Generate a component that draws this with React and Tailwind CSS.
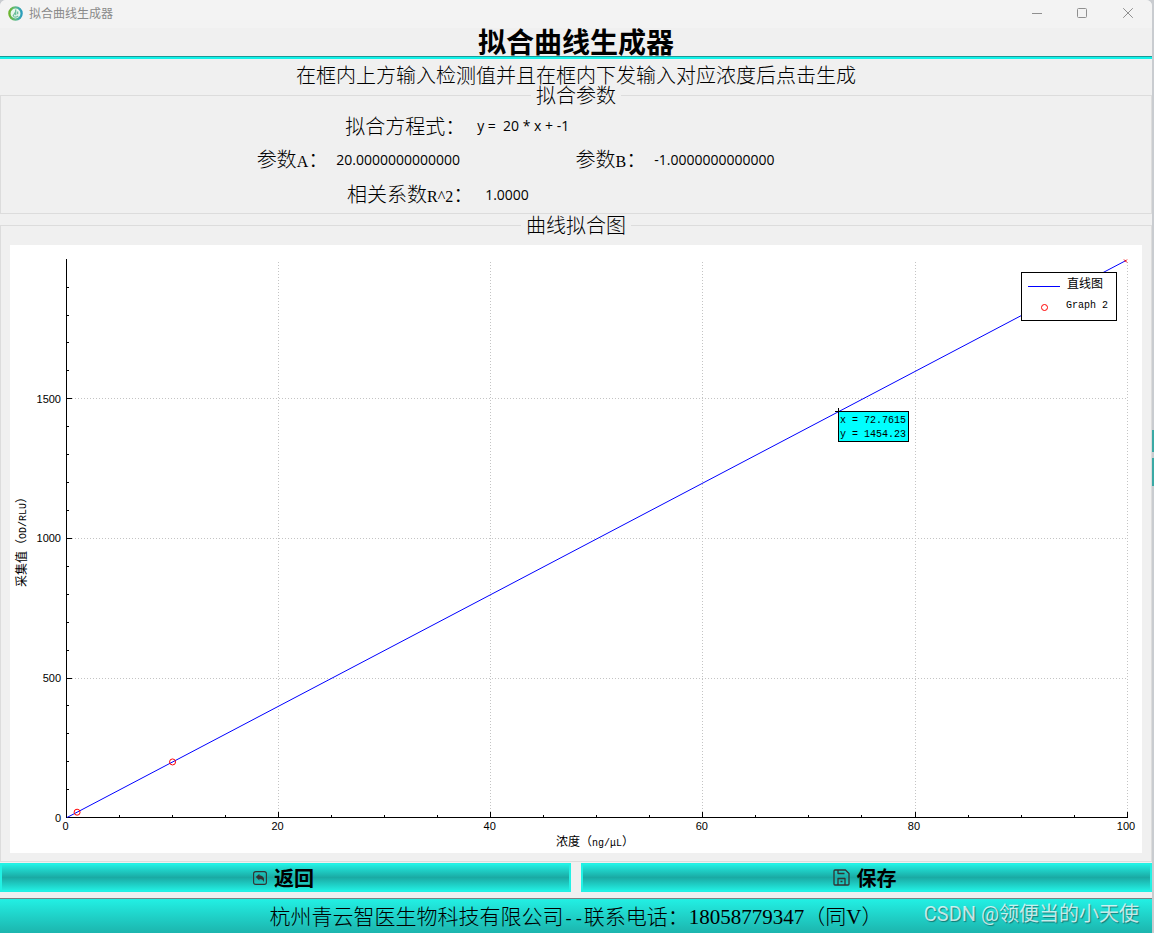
import React from "react";

const SONG = "font-['Liberation_Serif','Noto_Sans_CJK_SC',serif]";

const X0 = 56.5;
const Y0 = 572.5;
const px = (x) => X0 + x * 10.605;
const py = (y) => Y0 - y * 0.2792;
const snap = (v) => Math.round(v - 0.4) + 0.5;

function range(from, to, step) {
  const out = [];
  for (let v = from; v <= to; v += step) out.push(v);
  return out;
}

function AppIcon() {
  return (
    <svg viewBox="0 0 14 14" className="size-[15px]" aria-hidden="true">
      <defs>
        <linearGradient id="ring" x1="0" x2="1">
          <stop offset="0" stopColor="#6cb52f" />
          <stop offset="0.5" stopColor="#5dbb8a" />
          <stop offset="1" stopColor="#2b9dbd" />
        </linearGradient>
      </defs>
      <circle cx="7" cy="7" r="5.7" fill="#e9f6ee" stroke="url(#ring)" strokeWidth="2.2" />
      <path d="M7.2 3.2v5.4M4.6 9.6 7 5.6M5 9.8c1.6.8 3.4.6 4.6-.6M9 5.2v2.6" stroke="#6dbf9a" strokeWidth="1.2" fill="none" />
    </svg>
  );
}

function TitleBar() {
  return (
    <div className="flex h-7 items-center bg-[#f3f3f3] pb-0.5 pl-2">
      <AppIcon />
      <span className="ml-1.5 font-['Noto_Sans_CJK_SC',sans-serif] text-xs leading-4 text-[#8a8a8a]">拟合曲线生成器</span>
      <div className="ml-auto flex text-[#8f8f8f]">
        <button aria-label="最小化" className="grid h-6 w-[46px] place-items-center">
          <svg viewBox="0 0 10 10" className="size-2.5"><path d="M0 5.5h10" stroke="currentColor" /></svg>
        </button>
        <button aria-label="最大化" className="grid h-6 w-11 place-items-center">
          <svg viewBox="0 0 10 10" className="size-2.5"><rect x=".5" y=".5" width="9" height="9" rx="1" fill="none" stroke="currentColor" /></svg>
        </button>
        <button aria-label="关闭" className="grid h-6 w-12 place-items-center">
          <svg viewBox="0 0 10 10" className="size-2.5"><path d="M.2.2l9.6 9.6M9.8.2.2 9.8" stroke="currentColor" /></svg>
        </button>
      </div>
    </div>
  );
}

function Group({ title, className, children }) {
  return (
    <fieldset className={"min-w-0 border border-[#dcdcdc] " + className}>
      <legend className="mx-auto h-5 px-[5px] text-xl leading-[22px] font-light">{title}</legend>
      {children}
    </fieldset>
  );
}

function Label({ children }) {
  return <span className="pt-0.5 text-right text-xl leading-5 font-light whitespace-nowrap">{children}</span>;
}

function Latin({ children }) {
  return <span className="text-base leading-5">{children}</span>;
}

function Value({ children }) {
  return <output className="font-['Open_Sans',sans-serif] text-sm leading-5 whitespace-pre">{children}</output>;
}

function Chart() {
  return (
    <svg viewBox="0 0 1132 608" className="block h-auto w-full bg-white" role="img" aria-label="曲线拟合图">
      <g stroke="#c4c4c4" strokeDasharray="1 2" fill="none">
        {[20, 40, 60, 80, 100].map((x) => (
          <path key={x} d={`M${snap(px(x))} 17V568`} />
        ))}
        {[500, 1000, 1500].map((y) => (
          <path key={y} d={`M62 ${snap(py(y))}H1117`} />
        ))}
      </g>
      <g stroke="#000" fill="none" shapeRendering="crispEdges">
        <path d="M56.5 14V573M56 572.5H1118" />
        {range(5, 100, 5).map((x) => (
          <path key={x} d={`M${snap(px(x))} 572V${x % 20 === 0 ? 567 : 570}`} />
        ))}
        {range(100, 1900, 100).map((y) => (
          <path key={y} d={`M57 ${snap(py(y))}H${y % 500 === 0 ? 62 : 59}`} />
        ))}
      </g>
      <path d="M57 572.5 1116 15.5" stroke="#0000ff" fill="none" />
      <g stroke="#ff0000" fill="none">
        <circle cx={px(1)} cy={py(19)} r="3" />
        <circle cx={px(10)} cy={py(199)} r="3" />
        <path d="M1114 14.5l3 3M1117 14.5l-2 2" />
      </g>

      <g fontFamily="'Liberation Sans',sans-serif" fontSize="11" fill="#000">
        {[0, 20, 40, 60, 80, 100].map((x) => (
          <text key={x} x={px(x) - 1} y="585" textAnchor="middle">{x}</text>
        ))}
        {[0, 500, 1000, 1500].map((y) => (
          <text key={y} x="51" y={py(y) + 4} textAnchor="end">{y}</text>
        ))}
      </g>
      <g fontFamily="'Noto Sans CJK SC',sans-serif" fontSize="12" fill="#000" textAnchor="middle">
        <text x="585" y="601">
          浓度（<tspan fontFamily="'Liberation Mono',monospace" fontSize="10">ng/μL</tspan>）
        </text>
        <text transform="translate(16 294) rotate(-90)">
          采集值（<tspan fontFamily="'Liberation Mono',monospace" fontSize="10">OD/RLU</tspan>）
        </text>
      </g>

      <rect x="1011.5" y="27.5" width="95" height="48" fill="#fff" stroke="#000" />
      <path d="M1018 41.5h32" stroke="#0000ff" />
      <circle cx="1034.5" cy="62.5" r="3" stroke="#ff0000" fill="none" />
      <text x="1057" y="43" fontFamily="'Noto Sans CJK SC',sans-serif" fontSize="12">直线图</text>
      <text x="1056" y="63" fontFamily="'Liberation Mono',monospace" fontSize="10">Graph 2</text>

      <path d="M825 166.5h6M828.5 163v6" stroke="#000" />
      <rect x="828.5" y="166.5" width="70" height="30" fill="#00ffff" stroke="#000" />
      <g fontFamily="'Liberation Mono',monospace" fontSize="10" fill="#000">
        <text x="830" y="178">x = 72.7615</text>
        <text x="830" y="192">y = 1454.23</text>
      </g>
    </svg>
  );
}

function BackIcon() {
  return (
    <svg viewBox="0 0 14 14" className="size-3.5" aria-hidden="true">
      <rect x=".6" y=".6" width="12.8" height="12.8" rx="2.2" fill="none" stroke="#333" strokeWidth="1.1" />
      <path d="M2.8 5.900 6.400 2.800v1.800c3.600 0 5.400 2.200 4.400 6.600-.5-2.200-1.800-3.200-4.400-3.200v1.500z" fill="#333" />
    </svg>
  );
}

function SaveIcon() {
  return (
    <svg viewBox="0 0 17 17" className="size-[17px]" fill="none" stroke="#333" strokeWidth="1.3" strokeLinejoin="round" aria-hidden="true">
      <path d="M2 1h10.500L16 4.500V15a1 1 0 0 1-1 1H2a1 1 0 0 1-1-1V2a1 1 0 0 1 1-1z" />
      <path d="M5 1v3.500h6.500M5 16v-6.500h7V16M7.500 12.500h2" />
    </svg>
  );
}

function ActionButton({ icon, children }) {
  return (
    <button className="flex h-[29px] flex-1 items-center justify-center gap-[7px] border-2 border-[#22f1e4] bg-linear-to-b from-[#22ebdf] via-[#1aaaa4] to-[#22ebdf] pr-1 text-xl leading-5 font-bold">
      {icon}
      <span className="pt-0.5">{children}</span>
    </button>
  );
}

export default function App() {
  return (
    <div className="flex min-h-screen bg-[#c9ccd0]">
      <div className={"relative flex min-w-0 flex-1 flex-col overflow-hidden rounded-t-md bg-[#f0f0f0] text-black " + SONG}>
        <TitleBar />
        <h1 className="h-7 text-center text-[28px] leading-8 font-bold">拟合曲线生成器</h1>
        <div className="h-[3px] border-t border-[#1a9b98] bg-[#14f3ea]" />
        <p className="mt-1.5 h-5 text-center text-xl leading-[22px] font-light">在框内上方输入检测值并且在框内下发输入对应浓度后点击生成</p>

        <Group title="拟合参数" className="pt-1">
          <div className="grid h-[34px] grid-cols-[465fr_687fr] items-center">
            <Label>拟合方程式：</Label>
            <div className="pl-3"><Value>{"y =  20 * x + -1"}</Value></div>
          </div>
          <div className="grid h-[34px] grid-cols-[328fr_248fr_70fr_506fr] items-center">
            <Label>参数<Latin>A</Latin>：</Label>
            <div className="pl-2"><Value>20.0000000000000</Value></div>
            <Label>参数<Latin>B</Latin>：</Label>
            <div className="pl-2"><Value>-1.0000000000000</Value></div>
          </div>
          <div className="grid h-9 grid-cols-[473fr_679fr] items-center">
            <Label>相关系数<Latin>R^2</Latin>：</Label>
            <div className="pl-3"><Value>1.0000</Value></div>
          </div>
        </Group>

        <Group title="曲线拟合图" className="mt-px px-[9px] pt-2.5 pb-2">
          <Chart />
        </Group>

        <div className="mt-px flex gap-2.5">
          <ActionButton icon={<BackIcon />}>返回</ActionButton>
          <ActionButton icon={<SaveIcon />}>保存</ActionButton>
        </div>

        <footer className="mt-1.5 flex flex-1 items-center justify-center border-t border-[#808080] bg-linear-to-b from-[#22f0e4] to-[#1cb3ac] pt-1 text-[21px] leading-7 font-light">
          <p>
            杭州青云智医生物科技有限公司
            <span className="font-['Liberation_Mono',monospace] text-[17px]">--</span>
            联系电话：18058779347（同V）
          </p>
        </footer>
        <div className="absolute right-[13px] bottom-1.5 font-['Roboto','Noto_Sans_CJK_SC',sans-serif] text-xl leading-7 text-white/75 [text-shadow:1px_1px_1px_rgba(0,0,0,0.4)]">
          CSDN @领便当的小天使
        </div>
      </div>
      <div className="w-0.5 bg-[linear-gradient(to_bottom,#c9ccd0_0_430px,#3aa9a5_430px_452px,#c9ccd0_452px_458px,#3aa9a5_458px_486px,#c9ccd0_486px)]" />
    </div>
  );
}
